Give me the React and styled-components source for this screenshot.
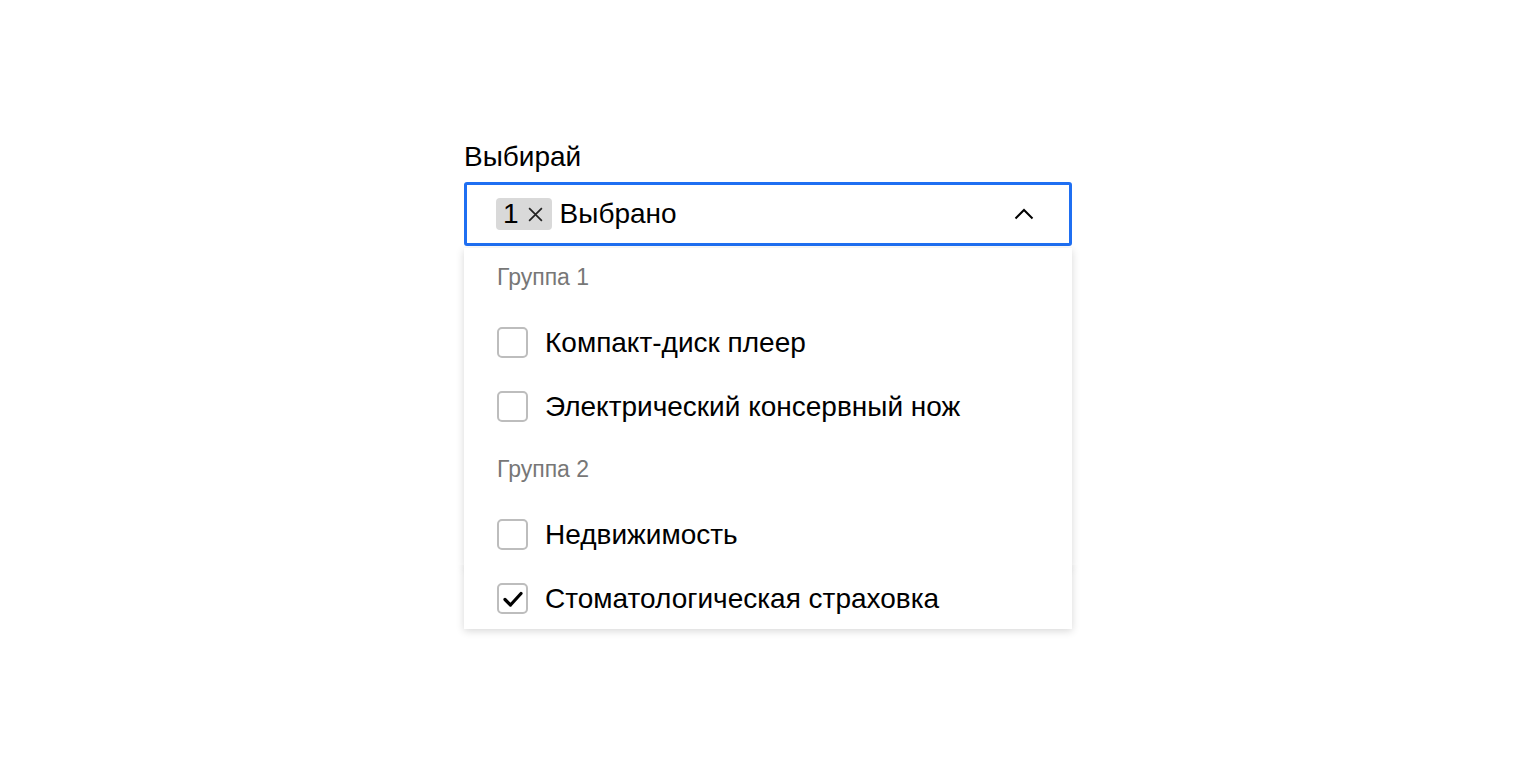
import React, { useState } from 'react';
import styled, { createGlobalStyle } from 'styled-components';

const GlobalStyle = createGlobalStyle`
  body {
    margin: 0;
    background: #ffffff;
    font-family: "Liberation Sans", Arial, sans-serif;
    color: #000;
  }
`;

const Page = styled.div`
  display: flex;
  justify-content: center;
  padding-top: 139px;
  height: 768px;
  box-sizing: border-box;
`;

const Field = styled.div`
  width: 608px;
  display: flex;
  flex-direction: column;
`;

const Label = styled.div`
  font-size: 28px;
  line-height: 36px;
  margin-bottom: 7px;
`;

const Control = styled.div`
  height: 64px;
  box-sizing: border-box;
  border: 3px solid #1f6ff2;
  border-radius: 3px;
  display: flex;
  align-items: center;
  padding: 0 35px 0 29px;
  gap: 8px;
`;

const Chip = styled.span`
  display: inline-flex;
  align-items: center;
  gap: 8px;
  height: 32px;
  padding: 0 8px 0 7px;
  background: #d9d9d9;
  border-radius: 4px;
  font-size: 28px;
`;

const Value = styled.span`
  font-size: 28px;
  flex: 1;
`;

const Chevron = styled.span`
  display: flex;
  width: 20px;
  justify-content: center;
`;

const Menu = styled.div`
  margin-top: 2px;
  display: flex;
  flex-direction: column;
`;

const Panel = styled.div`
  background: #fff;
  box-shadow: 0 2px 8px rgba(0, 0, 0, 0.16);
  border-radius: ${({ $tail }) => ($tail ? '0' : '0 0 4px 4px')};
  position: relative;
  margin-bottom: ${({ $tail }) => ($tail ? '0' : '-3px')};
  z-index: ${({ $tail }) => ($tail ? 1 : 0)};
  clip-path: ${({ $tail }) => ($tail ? 'inset(0 -20px -20px -20px)' : 'none')};
`;

const GroupTitle = styled.div`
  height: 64px;
  box-sizing: border-box;
  padding-bottom: 5px;
  display: flex;
  align-items: center;
  padding-left: 33px;
  font-size: 23px;
  color: #777777;
`;

const Option = styled.label`
  height: 64px;
  box-sizing: border-box;
  padding-bottom: ${({ $tail }) => ($tail ? '0' : '3px')};
  padding-top: ${({ $tail }) => ($tail ? '3px' : '0')};
  display: flex;
  align-items: center;
  padding-left: 33px;
  gap: 17px;
  font-size: 28px;
  cursor: pointer;
`;

const Box = styled.span`
  width: 31px;
  height: 31px;
  box-sizing: border-box;
  border: 2px solid #bdbdbd;
  border-radius: 5px;
  display: flex;
  align-items: center;
  justify-content: center;
`;

const Check = () => (
  <svg width="22" height="18" viewBox="0 0 22 18">
    <path d="M3 9.5 L8.5 15 L19 3.5" fill="none" stroke="#000" strokeWidth="3.2" strokeLinecap="round" strokeLinejoin="round" />
  </svg>
);

const groups = [
  { title: 'Группа 1', items: ['Компакт-диск плеер', 'Электрический консервный нож'] },
  { title: 'Группа 2', items: ['Недвижимость', 'Стоматологическая страховка'] },
];

const App = () => {
  const [selected, setSelected] = useState(['Стоматологическая страховка']);

  const toggle = (item) => {
    setSelected((s) => (s.includes(item) ? s.filter((x) => x !== item) : [...s, item]));
  };

  const renderOption = (item, tail = false) => (
    <Option key={item} $tail={tail} onClick={() => toggle(item)}>
      <Box>{selected.includes(item) && <Check />}</Box>
      {item}
    </Option>
  );

  const all = groups.flatMap((g) => g.items);
  const last = all[all.length - 1];

  return (
    <>
      <GlobalStyle />
      <Page>
        <Field>
          <Label>Выбирай</Label>
          <Control>
            <Chip>
              {selected.length}
              <svg width="17" height="17" viewBox="0 0 16 16">
                <path d="M2 2 L14 14 M14 2 L2 14" stroke="#222" strokeWidth="1.6" />
              </svg>
            </Chip>
            <Value>Выбрано</Value>
            <Chevron>
              <svg width="20" height="12" viewBox="0 0 20 12">
                <path d="M1.5 10.5 L10 2 L18.5 10.5" fill="none" stroke="#000" strokeWidth="2" />
              </svg>
            </Chevron>
          </Control>
          <Menu>
            <Panel>
              {groups.map((g) => (
                <React.Fragment key={g.title}>
                  <GroupTitle>{g.title}</GroupTitle>
                  {g.items.filter((i) => i !== last).map((i) => renderOption(i))}
                </React.Fragment>
              ))}
            </Panel>
            <Panel $tail>{renderOption(last, true)}</Panel>
          </Menu>
        </Field>
      </Page>
    </>
  );
};

export default App;
